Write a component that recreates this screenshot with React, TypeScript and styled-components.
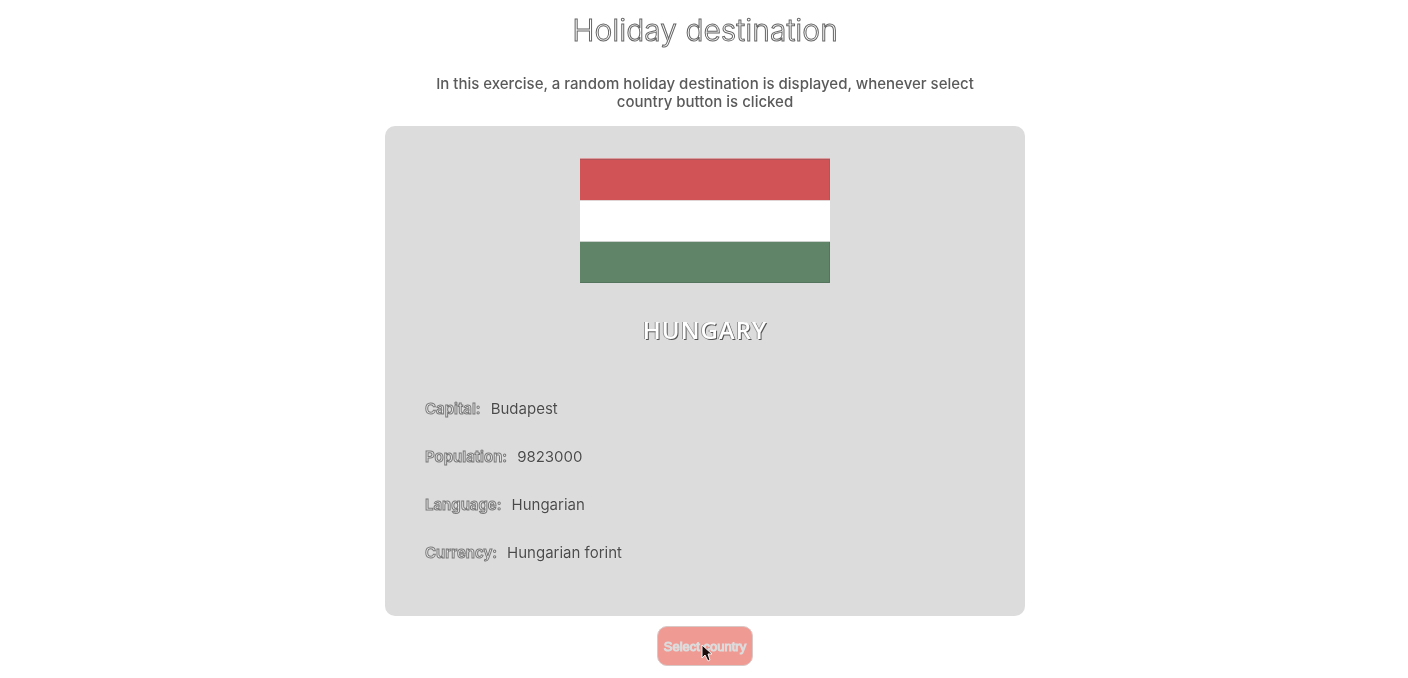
import React, { useState } from "react";
import styled, { createGlobalStyle } from "styled-components";

const GlobalStyle = createGlobalStyle`
  *, *::before, *::after { box-sizing: border-box; }
  body {
    margin: 0;
    background: #ffffff;
    color: #4a4a4a;
    font-family: Inter, "Liberation Sans", sans-serif;
    font-size: 15px;
  }
`;

const Page = styled.main`
  display: flex;
  flex-direction: column;
  align-items: center;
  padding: 10px 0 12px 2px;
  will-change: transform;
`;

const Title = styled.h1`
  margin: 0 0 25px;
  font-size: 30px;
  line-height: 40px;
  font-weight: 300;
  color: #ffffff;
  -webkit-text-stroke: 1px #666666;
`;

const Intro = styled.p`
  width: 100%;
  max-width: 560px;
  margin: 0 0 15px;
  line-height: 18px;
  font-weight: 500;
  color: #5a5a5a;
  text-align: center;
`;

const Card = styled.section`
  display: flex;
  flex-direction: column;
  align-items: center;
  width: 100%;
  max-width: 640px;
  padding: 32px 40px 40px;
  border-radius: 10px;
  background: #dcdcdc;
`;

const Flag = styled.svg`
  display: block;
  width: 250px;
  height: 125px;
`;

const CountryName = styled.h2`
  margin: 31px 0 38px;
  font-family: "Open Sans", sans-serif;
  font-size: 24px;
  line-height: 32px;
  font-weight: 600;
  letter-spacing: 1px;
  text-transform: uppercase;
  color: #ffffff;
  text-shadow: 1px 1px 0 #555555, -1px 0 0 #999999;
`;

const Facts = styled.dl`
  align-self: stretch;
  margin: 0;
`;

const Fact = styled.div`
  display: flex;
  gap: 10px;
  height: 48px;
  align-items: center;
  text-shadow: 0 0 1px #ffffff;
`;

const Label = styled.dt`
  font-weight: 600;
  color: #eeeeee;
  -webkit-text-stroke: 1px #777777;
`;

const Value = styled.dd`
  margin: 0;
`;

const SelectButton = styled.button`
  position: relative;
  height: 40px;
  margin-top: 10px;
  padding: 0 6px;
  border: 1px solid #d8c8c6;
  border-radius: 10px;
  background: #f09a94;
  color: #dcdcdc;
  font-family: "Liberation Sans", sans-serif;
  font-size: 13px;
  -webkit-text-stroke: 1px #dcdcdc;
  cursor: pointer;
`;

const Cursor = styled.svg`
  position: absolute;
  left: 43px;
  top: 17px;
  width: 12px;
  height: 18px;
`;

const countries = [
  {
    name: "Hungary",
    stripes: ["#d15356", "#ffffff", "#5f8468"],
    facts: [
      ["Capital", "Budapest"],
      ["Population", "9823000"],
      ["Language", "Hungarian"],
      ["Currency", "Hungarian forint"],
    ],
  },
];

export default function App() {
  const [index, setIndex] = useState(0);
  const country = countries[index];
  const selectCountry = () =>
    setIndex(Math.floor(Math.random() * countries.length));

  return (
    <>
      <GlobalStyle />
      <Page>
        <Title>Holiday destination</Title>
        <Intro>
          In this exercise, a random holiday destination is displayed, whenever
          select country button is clicked
        </Intro>
        <Card>
          <Flag
            viewBox="0 0 250 125"
            role="img"
            aria-label={`Flag of ${country.name}`}
          >
            <rect width="250" height="42" fill={country.stripes[0]} />
            <rect y="42" width="250" height="41" fill={country.stripes[1]} />
            <rect y="83" width="250" height="42" fill={country.stripes[2]} />
            <path d="M0 .5H250" stroke="#dd9a9c" />
            <path d="M0 1.500H249.500V42" fill="none" stroke="#b2555b" />
            <path d="M0 42.500H250" stroke="#e0d4d5" />
            <path d="M0 83.500H250" stroke="#cbd2cd" />
            <path d="M0 124.500H249.500V84" fill="none" stroke="#55745d" />
          </Flag>
          <CountryName>{country.name}</CountryName>
          <Facts>
            {country.facts.map(([label, value]) => (
              <Fact key={label}>
                <Label>{label}:</Label>
                <Value>{value}</Value>
              </Fact>
            ))}
          </Facts>
        </Card>
        <SelectButton type="button" onClick={selectCountry}>
          Select country
          <Cursor viewBox="0 0 12 18" aria-hidden="true">
            <path
              d="M1 1V14L4 11L7 17L9 16L7 10H11Z"
              fill="#1c0c0c"
              stroke="#f4f0f0"
            />
          </Cursor>
        </SelectButton>
      </Page>
    </>
  );
}
